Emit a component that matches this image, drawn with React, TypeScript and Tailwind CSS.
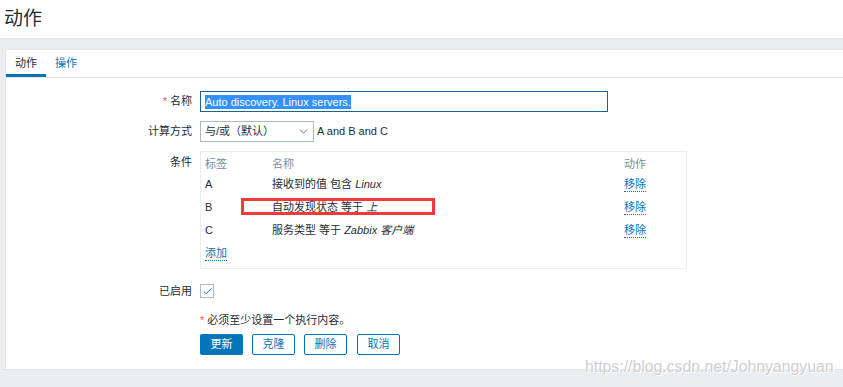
import { Check, ChevronDown } from "lucide-react";

const font = "font-['Liberation_Sans','Noto_Sans_CJK_SC',sans-serif]";

type Cond = { tag: string; text: string; italic: string };

const conditions: Cond[] = [
  { tag: "A", text: "接收到的值 包含 ", italic: "Linux" },
  { tag: "B", text: "自动发现状态 等于 ", italic: "上" },
  { tag: "C", text: "服务类型 等于 ", italic: "Zabbix 客户端" },
];

function Label({ children }: { children: React.ReactNode }) {
  return <div className="w-[194px] shrink-0 pr-[8px] text-right">{children}</div>;
}

function LinkText({ children }: { children: React.ReactNode }) {
  return (
    <span className="border-b border-dotted border-[#0275b8] leading-[14px] text-[#0275b8]">
      {children}
    </span>
  );
}

export default function App() {
  return (
    <div className={`relative h-[387px] w-[843px] overflow-hidden bg-[#ebeef0] text-[11px] text-[#1f2c33] ${font}`}>
      <div className="h-[39px] border-b border-[#dfe4e7] bg-white pl-[4px] pt-[5px] text-[19px] leading-[28px]">
        动作
      </div>

      <div className="ml-[5px] mt-[10px] h-[321px] border border-r-0 border-[#dfe4e7] bg-white">
        <div className="flex h-[28px] border-b border-[#dfe4e7]">
          <div className="border-b-[3px] border-[#0275b8] px-[9px] pt-[6px] leading-[14px]">动作</div>
          <div className="px-[9px] pt-[6px] leading-[14px] text-[#0275b8]">操作</div>
        </div>

        <div className="pt-[13px]">
          <div className="flex items-center">
            <Label>
              <span className="text-[#e45959]">*</span> 名称
            </Label>
            <div className="flex h-[21px] w-[408px] items-center border border-[#1d6391] px-[4px]">
              <span className="bg-[#3390ff] text-white leading-[14px]">Auto discovery. Linux servers.</span>
            </div>
          </div>

          <div className="mt-[9px] flex items-center">
            <Label>计算方式</Label>
            <div className="flex h-[21px] w-[114px] items-center justify-between border border-[#acbbc2] pl-[4px] pr-[3px]">
              <span>与/或（默认）</span>
              <ChevronDown className="h-[13px] w-[13px] text-[#4f4f4f]" strokeWidth={1.5} />
            </div>
            <span className="ml-[3px]">A and B and C</span>
          </div>

          <div className="mt-[9px] flex items-start">
            <Label>
              <div className="pt-[3px]">条件</div>
            </Label>
            <div className="relative h-[118px] w-[487px] border border-[#ebeef0] pl-[4px] pt-[3px]">
              <div className="flex h-[18px] items-center text-[#768d99]">
                <span className="w-[67px]">标签</span>
                <span className="w-[352px]">名称</span>
                <span>动作</span>
              </div>
              {conditions.map((c) => (
                <div key={c.tag} className="flex h-[23px] items-center">
                  <span className="w-[67px]">{c.tag}</span>
                  <span className="w-[352px]">
                    {c.text}
                    <i>{c.italic}</i>
                  </span>
                  <LinkText>移除</LinkText>
                </div>
              ))}
              <div className="flex h-[23px] items-center">
                <LinkText>添加</LinkText>
              </div>
              <div className="absolute left-[40px] top-[46px] h-[17px] w-[194px] border-[3px] border-[#f03a3a]" />
            </div>
          </div>

          <div className="mt-[14px] flex items-center">
            <Label>已启用</Label>
            <div className="flex h-[14px] w-[14px] items-center justify-center border border-[#acbbc2]">
              <Check className="h-[11px] w-[11px] text-[#0275b8]" strokeWidth={2} />
            </div>
          </div>

          <div className="mt-[12px] flex">
            <div className="w-[194px] shrink-0" />
            <span>
              <span className="text-[#e45959]">*</span> 必须至少设置一个执行内容。
            </span>
          </div>

          <div className="mt-[6px] flex gap-[9px] pl-[194px]">
            <button className="h-[21px] w-[43px] rounded-[2px] bg-[#0275b8] text-white">更新</button>
            <button className="h-[21px] w-[43px] rounded-[2px] border border-[#0275b8] text-[#0275b8]">克隆</button>
            <button className="h-[21px] w-[43px] rounded-[2px] border border-[#0275b8] text-[#0275b8]">删除</button>
            <button className="ml-[1px] h-[21px] w-[43px] rounded-[2px] border border-[#0275b8] text-[#0275b8]">取消</button>
          </div>
        </div>
      </div>

      <div className="absolute left-[585px] top-[358px] font-['Liberation_Sans',sans-serif] text-[15.8px] leading-[17px] text-[#cfcfcf] [text-shadow:0_0_1px_#fff,1px_1px_0_#fff]">
        https://blog.csdn.net/Johnyangyuan
      </div>
    </div>
  );
}
